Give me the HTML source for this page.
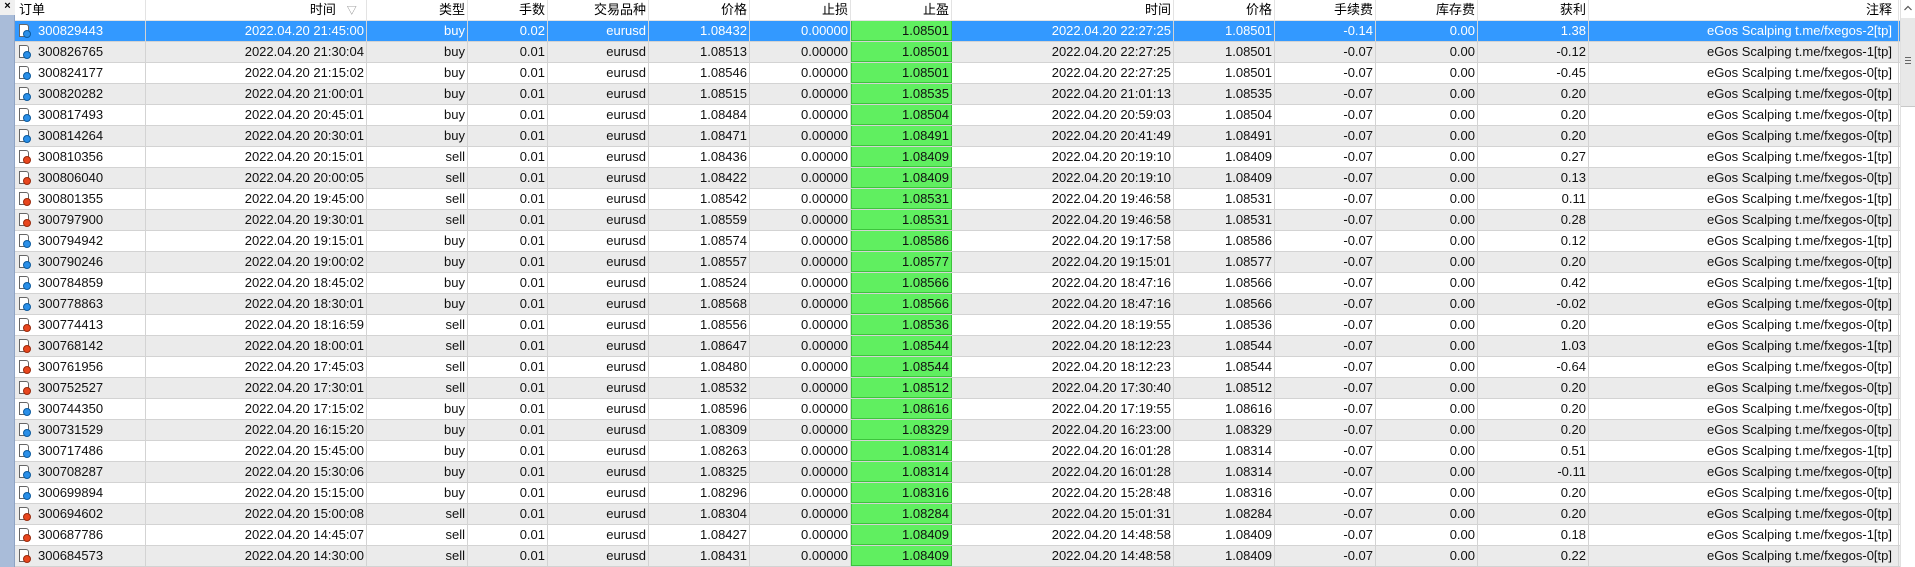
<!DOCTYPE html>
<html><head><meta charset="utf-8"><style>
*{box-sizing:border-box;margin:0;padding:0}
body{width:1915px;height:567px;overflow:hidden;background:#fff;font-family:"Liberation Sans","Noto Sans CJK SC",sans-serif;font-size:13px;color:#111;position:relative}
#side{position:absolute;left:0;top:0;width:15px;height:567px;background:#a9bcd9;border-right:1px solid #8ea3c4}
#side b{position:absolute;left:0;top:0;width:15px;height:15px;background:#f0f0f0;font-size:11px;line-height:13px;text-align:center;color:#000}
#tbl{position:absolute;left:15px;top:0;width:1885px}
.r{display:flex;height:21px;border-bottom:1px solid #d3d3d3;background:#fff}
.r:nth-child(odd){background:#ebebeb}
.r.h{background:#fff;border-bottom:1px solid #e3e3e3}
.r.s{background:#3399ff;color:#fff}
.r>div{height:20px;line-height:20px;border-right:1px solid #d3d3d3;text-align:right;padding-right:2px;white-space:nowrap;overflow:hidden;flex:none}
.r.h>div{border-right:1px solid #e3e3e3;background:#fff;color:#000}
.r>div:nth-child(1){width:131px;text-align:left;padding-left:23px;position:relative}
.r.h>div:nth-child(1){padding-left:4px}
.r>div:nth-child(2){width:221px}
.r>div:nth-child(3){width:101px}
.r>div:nth-child(4){width:80px}
.r>div:nth-child(5){width:101px}
.r>div:nth-child(6){width:101px}
.r>div:nth-child(7){width:101px}
.r>div:nth-child(8){width:101px}
.r:not(.h)>div:nth-child(8){background:#60ef60;color:#111;border:1px solid #3cc43c;border-top:none}
.r>div:nth-child(9){width:222px}
.r>div:nth-child(10){width:101px}
.r>div:nth-child(11){width:101px}
.r>div:nth-child(12){width:102px}
.r>div:nth-child(13){width:111px}
.r>div:nth-child(14){width:310px;padding-right:6px}
.ic{position:absolute;left:4px;top:3px;width:10px;height:13px;background:#fff;border:1px solid #666;border-radius:0 3px 0 0}
.ic::after{content:"";position:absolute;right:-3px;bottom:-2px;width:6px;height:6px;border-radius:50%;background:#2a8fe8;border:1px solid #0b5a9e}
.ic.x::after{background:#e8461e;border-color:#9a2a0b}
#sb{position:absolute;left:1900px;top:0;width:15px;height:567px;background:#fff;border-left:1px solid #e0e0e0}
#sb .u{position:absolute;left:0;top:0;width:14px;height:17px;background:#fff}
#sb .t{position:absolute;left:0;top:18px;width:14px;height:89px;background:#e8e8e8;border-bottom:1px solid #c8c8c8}
#sb .t i{position:absolute;left:4px;width:6px;height:1px;background:#666}
</style></head><body>
<div id="side"><b>×</b></div>
<div id="tbl">
<div class="r h"><div>订单</div><div>时间 &nbsp;&nbsp;<span style="color:#888;font-size:10px">▽</span>&nbsp;&nbsp;</div><div>类型</div><div>手数</div><div>交易品种</div><div>价格</div><div>止损</div><div>止盈</div><div>时间</div><div>价格</div><div>手续费</div><div>库存费</div><div>获利</div><div>注释</div></div>
<div class="r s"><div><i class="ic"></i>300829443</div><div>2022.04.20 21:45:00</div><div>buy</div><div>0.02</div><div>eurusd</div><div>1.08432</div><div>0.00000</div><div>1.08501</div><div>2022.04.20 22:27:25</div><div>1.08501</div><div>-0.14</div><div>0.00</div><div>1.38</div><div>eGos Scalping t.me/fxegos-2[tp]</div></div>
<div class="r"><div><i class="ic"></i>300826765</div><div>2022.04.20 21:30:04</div><div>buy</div><div>0.01</div><div>eurusd</div><div>1.08513</div><div>0.00000</div><div>1.08501</div><div>2022.04.20 22:27:25</div><div>1.08501</div><div>-0.07</div><div>0.00</div><div>-0.12</div><div>eGos Scalping t.me/fxegos-1[tp]</div></div>
<div class="r"><div><i class="ic"></i>300824177</div><div>2022.04.20 21:15:02</div><div>buy</div><div>0.01</div><div>eurusd</div><div>1.08546</div><div>0.00000</div><div>1.08501</div><div>2022.04.20 22:27:25</div><div>1.08501</div><div>-0.07</div><div>0.00</div><div>-0.45</div><div>eGos Scalping t.me/fxegos-0[tp]</div></div>
<div class="r"><div><i class="ic"></i>300820282</div><div>2022.04.20 21:00:01</div><div>buy</div><div>0.01</div><div>eurusd</div><div>1.08515</div><div>0.00000</div><div>1.08535</div><div>2022.04.20 21:01:13</div><div>1.08535</div><div>-0.07</div><div>0.00</div><div>0.20</div><div>eGos Scalping t.me/fxegos-0[tp]</div></div>
<div class="r"><div><i class="ic"></i>300817493</div><div>2022.04.20 20:45:01</div><div>buy</div><div>0.01</div><div>eurusd</div><div>1.08484</div><div>0.00000</div><div>1.08504</div><div>2022.04.20 20:59:03</div><div>1.08504</div><div>-0.07</div><div>0.00</div><div>0.20</div><div>eGos Scalping t.me/fxegos-0[tp]</div></div>
<div class="r"><div><i class="ic"></i>300814264</div><div>2022.04.20 20:30:01</div><div>buy</div><div>0.01</div><div>eurusd</div><div>1.08471</div><div>0.00000</div><div>1.08491</div><div>2022.04.20 20:41:49</div><div>1.08491</div><div>-0.07</div><div>0.00</div><div>0.20</div><div>eGos Scalping t.me/fxegos-0[tp]</div></div>
<div class="r"><div><i class="ic x"></i>300810356</div><div>2022.04.20 20:15:01</div><div>sell</div><div>0.01</div><div>eurusd</div><div>1.08436</div><div>0.00000</div><div>1.08409</div><div>2022.04.20 20:19:10</div><div>1.08409</div><div>-0.07</div><div>0.00</div><div>0.27</div><div>eGos Scalping t.me/fxegos-1[tp]</div></div>
<div class="r"><div><i class="ic x"></i>300806040</div><div>2022.04.20 20:00:05</div><div>sell</div><div>0.01</div><div>eurusd</div><div>1.08422</div><div>0.00000</div><div>1.08409</div><div>2022.04.20 20:19:10</div><div>1.08409</div><div>-0.07</div><div>0.00</div><div>0.13</div><div>eGos Scalping t.me/fxegos-0[tp]</div></div>
<div class="r"><div><i class="ic x"></i>300801355</div><div>2022.04.20 19:45:00</div><div>sell</div><div>0.01</div><div>eurusd</div><div>1.08542</div><div>0.00000</div><div>1.08531</div><div>2022.04.20 19:46:58</div><div>1.08531</div><div>-0.07</div><div>0.00</div><div>0.11</div><div>eGos Scalping t.me/fxegos-1[tp]</div></div>
<div class="r"><div><i class="ic x"></i>300797900</div><div>2022.04.20 19:30:01</div><div>sell</div><div>0.01</div><div>eurusd</div><div>1.08559</div><div>0.00000</div><div>1.08531</div><div>2022.04.20 19:46:58</div><div>1.08531</div><div>-0.07</div><div>0.00</div><div>0.28</div><div>eGos Scalping t.me/fxegos-0[tp]</div></div>
<div class="r"><div><i class="ic"></i>300794942</div><div>2022.04.20 19:15:01</div><div>buy</div><div>0.01</div><div>eurusd</div><div>1.08574</div><div>0.00000</div><div>1.08586</div><div>2022.04.20 19:17:58</div><div>1.08586</div><div>-0.07</div><div>0.00</div><div>0.12</div><div>eGos Scalping t.me/fxegos-1[tp]</div></div>
<div class="r"><div><i class="ic"></i>300790246</div><div>2022.04.20 19:00:02</div><div>buy</div><div>0.01</div><div>eurusd</div><div>1.08557</div><div>0.00000</div><div>1.08577</div><div>2022.04.20 19:15:01</div><div>1.08577</div><div>-0.07</div><div>0.00</div><div>0.20</div><div>eGos Scalping t.me/fxegos-0[tp]</div></div>
<div class="r"><div><i class="ic"></i>300784859</div><div>2022.04.20 18:45:02</div><div>buy</div><div>0.01</div><div>eurusd</div><div>1.08524</div><div>0.00000</div><div>1.08566</div><div>2022.04.20 18:47:16</div><div>1.08566</div><div>-0.07</div><div>0.00</div><div>0.42</div><div>eGos Scalping t.me/fxegos-1[tp]</div></div>
<div class="r"><div><i class="ic"></i>300778863</div><div>2022.04.20 18:30:01</div><div>buy</div><div>0.01</div><div>eurusd</div><div>1.08568</div><div>0.00000</div><div>1.08566</div><div>2022.04.20 18:47:16</div><div>1.08566</div><div>-0.07</div><div>0.00</div><div>-0.02</div><div>eGos Scalping t.me/fxegos-0[tp]</div></div>
<div class="r"><div><i class="ic x"></i>300774413</div><div>2022.04.20 18:16:59</div><div>sell</div><div>0.01</div><div>eurusd</div><div>1.08556</div><div>0.00000</div><div>1.08536</div><div>2022.04.20 18:19:55</div><div>1.08536</div><div>-0.07</div><div>0.00</div><div>0.20</div><div>eGos Scalping t.me/fxegos-0[tp]</div></div>
<div class="r"><div><i class="ic x"></i>300768142</div><div>2022.04.20 18:00:01</div><div>sell</div><div>0.01</div><div>eurusd</div><div>1.08647</div><div>0.00000</div><div>1.08544</div><div>2022.04.20 18:12:23</div><div>1.08544</div><div>-0.07</div><div>0.00</div><div>1.03</div><div>eGos Scalping t.me/fxegos-1[tp]</div></div>
<div class="r"><div><i class="ic x"></i>300761956</div><div>2022.04.20 17:45:03</div><div>sell</div><div>0.01</div><div>eurusd</div><div>1.08480</div><div>0.00000</div><div>1.08544</div><div>2022.04.20 18:12:23</div><div>1.08544</div><div>-0.07</div><div>0.00</div><div>-0.64</div><div>eGos Scalping t.me/fxegos-0[tp]</div></div>
<div class="r"><div><i class="ic x"></i>300752527</div><div>2022.04.20 17:30:01</div><div>sell</div><div>0.01</div><div>eurusd</div><div>1.08532</div><div>0.00000</div><div>1.08512</div><div>2022.04.20 17:30:40</div><div>1.08512</div><div>-0.07</div><div>0.00</div><div>0.20</div><div>eGos Scalping t.me/fxegos-0[tp]</div></div>
<div class="r"><div><i class="ic"></i>300744350</div><div>2022.04.20 17:15:02</div><div>buy</div><div>0.01</div><div>eurusd</div><div>1.08596</div><div>0.00000</div><div>1.08616</div><div>2022.04.20 17:19:55</div><div>1.08616</div><div>-0.07</div><div>0.00</div><div>0.20</div><div>eGos Scalping t.me/fxegos-0[tp]</div></div>
<div class="r"><div><i class="ic"></i>300731529</div><div>2022.04.20 16:15:20</div><div>buy</div><div>0.01</div><div>eurusd</div><div>1.08309</div><div>0.00000</div><div>1.08329</div><div>2022.04.20 16:23:00</div><div>1.08329</div><div>-0.07</div><div>0.00</div><div>0.20</div><div>eGos Scalping t.me/fxegos-0[tp]</div></div>
<div class="r"><div><i class="ic"></i>300717486</div><div>2022.04.20 15:45:00</div><div>buy</div><div>0.01</div><div>eurusd</div><div>1.08263</div><div>0.00000</div><div>1.08314</div><div>2022.04.20 16:01:28</div><div>1.08314</div><div>-0.07</div><div>0.00</div><div>0.51</div><div>eGos Scalping t.me/fxegos-1[tp]</div></div>
<div class="r"><div><i class="ic"></i>300708287</div><div>2022.04.20 15:30:06</div><div>buy</div><div>0.01</div><div>eurusd</div><div>1.08325</div><div>0.00000</div><div>1.08314</div><div>2022.04.20 16:01:28</div><div>1.08314</div><div>-0.07</div><div>0.00</div><div>-0.11</div><div>eGos Scalping t.me/fxegos-0[tp]</div></div>
<div class="r"><div><i class="ic"></i>300699894</div><div>2022.04.20 15:15:00</div><div>buy</div><div>0.01</div><div>eurusd</div><div>1.08296</div><div>0.00000</div><div>1.08316</div><div>2022.04.20 15:28:48</div><div>1.08316</div><div>-0.07</div><div>0.00</div><div>0.20</div><div>eGos Scalping t.me/fxegos-0[tp]</div></div>
<div class="r"><div><i class="ic x"></i>300694602</div><div>2022.04.20 15:00:08</div><div>sell</div><div>0.01</div><div>eurusd</div><div>1.08304</div><div>0.00000</div><div>1.08284</div><div>2022.04.20 15:01:31</div><div>1.08284</div><div>-0.07</div><div>0.00</div><div>0.20</div><div>eGos Scalping t.me/fxegos-0[tp]</div></div>
<div class="r"><div><i class="ic x"></i>300687786</div><div>2022.04.20 14:45:07</div><div>sell</div><div>0.01</div><div>eurusd</div><div>1.08427</div><div>0.00000</div><div>1.08409</div><div>2022.04.20 14:48:58</div><div>1.08409</div><div>-0.07</div><div>0.00</div><div>0.18</div><div>eGos Scalping t.me/fxegos-1[tp]</div></div>
<div class="r"><div><i class="ic x"></i>300684573</div><div>2022.04.20 14:30:00</div><div>sell</div><div>0.01</div><div>eurusd</div><div>1.08431</div><div>0.00000</div><div>1.08409</div><div>2022.04.20 14:48:58</div><div>1.08409</div><div>-0.07</div><div>0.00</div><div>0.22</div><div>eGos Scalping t.me/fxegos-0[tp]</div></div>
</div>
<div id="sb"><div class="u"><svg width="14" height="17" viewBox="0 0 14 17"><path d="M3.5 10 L7 6.5 L10.5 10" fill="none" stroke="#555" stroke-width="1.2"/></svg></div><div class="t"><i style="top:39px"></i><i style="top:42px"></i><i style="top:45px"></i></div></div>
</body></html>
